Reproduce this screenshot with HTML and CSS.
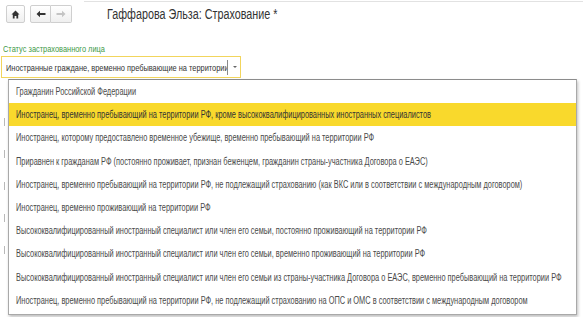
FILE: index.html
```html
<!DOCTYPE html>
<html lang="ru">
<head>
    <meta charset="UTF-8">
    <title>Гаффарова Эльза: Страхование</title>
    <link rel="stylesheet" href="styles.css">
</head>
<body>
    <div class="window">
        <div class="toolbar">
            <button class="btn home" title="Начальная страница">
                <svg width="9" height="9" viewBox="0 0 9 9"><path d="M4.5 0.5 L0.5 4.5 H1.8 V8.5 H3.6 V6 H5.4 V8.5 H7.2 V4.5 H8.5 Z" fill="#333"/></svg>
            </button>
            <div class="nav">
                <button class="btn nav-btn">
                    <svg width="10" height="8" viewBox="0 0 10 8"><path d="M0.5 4 L4 0.8 V3 H9.5 V5 H4 V7.2 Z" fill="#333"/></svg>
                </button>
                <button class="btn nav-btn">
                    <svg width="10" height="8" viewBox="0 0 10 8"><path d="M9.5 4 L6 0.8 V3 H0.5 V5 H6 V7.2 Z" fill="#c4c4c4"/></svg>
                </button>
            </div>
            <div class="title"><span class="txt">Гаффарова Эльза: Страхование *</span></div>
        </div>

        <div class="form">
            <div class="field-label"><span class="txt">Статус застрахованного лица</span></div>
            <div class="select">
                <span class="select-text"><span class="txt">Иностранные граждане, временно пребывающие на территории</span></span>
                <span class="select-btn"><span class="caret"></span></span>
            </div>
            <div class="under">
                <span class="mark"></span>
                <span class="mark"></span>
                <span class="mark"></span>
                <span class="mark"></span>
                <span class="mark"></span>
            </div>
        </div>

        <ul class="dropdown">
            <li><span class="txt">Гражданин Российской Федерации</span></li>
            <li class="active"><span class="txt">Иностранец, временно пребывающий на территории РФ, кроме высококвалифицированных иностранных специалистов</span></li>
            <li><span class="txt">Иностранец, которому предоставлено временное убежище, временно пребывающий на территории РФ</span></li>
            <li><span class="txt">Приравнен к гражданам РФ (постоянно проживает, признан беженцем, гражданин страны-участника Договора о ЕАЭС)</span></li>
            <li><span class="txt">Иностранец, временно пребывающий на территории РФ, не подлежащий страхованию (как ВКС или в соответствии с международным договором)</span></li>
            <li><span class="txt">Иностранец, временно проживающий на территории РФ</span></li>
            <li><span class="txt">Высококвалифицированный иностранный специалист или член его семьи, постоянно проживающий на территории РФ</span></li>
            <li><span class="txt">Высококвалифицированный иностранный специалист или член его семьи, временно проживающий на территории РФ</span></li>
            <li><span class="txt">Высококвалифицированный иностранный специалист или член его семьи из страны-участника Договора о ЕАЭС, временно пребывающий на территории РФ</span></li>
            <li><span class="txt">Иностранец, временно пребывающий на территории РФ, не подлежащий страхованию на ОПС и ОМС в соответствии с международным договором</span></li>
        </ul>
    </div>
</body>
</html>
```

FILE: styles.css
```css
* {
    margin: 0;
    padding: 0;
    box-sizing: border-box;
}

body {
    font-family: "Liberation Sans", Arial, sans-serif;
    background: #fff;
    color: #444;
    width: 583px;
    height: 317px;
    overflow: hidden;
}

/* the source UI uses a narrow face, so text is squeezed horizontally */
.txt {
    display: inline-block;
    white-space: nowrap;
    transform: scaleX(0.78);
    transform-origin: left center;
}

.window {
    position: relative;
    height: 317px;
    border-top: 1px solid #fff;
}

.window::before {
    content: "";
    display: block;
    height: 1px;
    margin-left: 84px;
    background: #e2e2e2;
}

.toolbar {
    display: flex;
    align-items: center;
    padding: 3px 0 0 6px;
    height: 21px;
}

.btn {
    display: flex;
    align-items: center;
    justify-content: center;
    height: 18px;
    border: 1px solid #cfcfcf;
    border-radius: 2px;
    background: linear-gradient(#ffffff, #efefef);
}

.home {
    width: 19px;
}

.nav {
    display: flex;
    margin-left: 5px;
}

.nav-btn {
    width: 21px;
}

.nav-btn:first-child {
    border-radius: 2px 0 0 2px;
}

.nav-btn:last-child {
    border-left: none;
    border-radius: 0 2px 2px 0;
}

.title {
    margin-left: 35px;
    font-size: 14px;
    color: #333;
    line-height: 18px;
    white-space: nowrap;
}

.title .txt {
    transform: scaleX(0.77);
}

.form {
    padding: 20px 0 0 2px;
}

.field-label {
    font-size: 9.5px;
    color: #3e9a47;
    line-height: 11px;
    padding-left: 1px;
}

.select {
    display: flex;
    align-items: center;
    width: 240px;
    height: 22px;
    margin-top: 2px;
    margin-left: -1px;
    border: 1px solid #f2d55c;
    background: #fff;
}

.select-text {
    flex: 1;
    padding-left: 4px;
    font-size: 9.5px;
    color: #333;
    white-space: nowrap;
    overflow: hidden;
}

.select-btn {
    display: flex;
    align-items: center;
    justify-content: center;
    width: 12px;
    height: 15px;
    border-left: 1px solid #8a8a8a;
    margin-right: 1px;
}

.caret {
    width: 0;
    height: 0;
    border-left: 2px solid transparent;
    border-right: 2px solid transparent;
    border-top: 2px solid #666;
    margin-left: 2px;
}

.under {
    display: flex;
    flex-direction: column;
    gap: 24px;
    padding: 40px 0 0 2px;
}

.mark {
    display: block;
    width: 1px;
    height: 8px;
    background: #b8b8b8;
}

.dropdown {
    position: absolute;
    left: 8px;
    top: 78px;
    width: 569px;
    list-style: none;
    background: #fff;
    border: 1px solid #a9a9a9;
    border-top-color: #8c8c8c;
    box-shadow: 1px 2px 3px rgba(0, 0, 0, 0.25);
    padding: 0 0 2px;
}

.dropdown li {
    height: 23.2px;
    line-height: 23px;
    padding-left: 7px;
    font-size: 10px;
    color: #4a4a4a;
    white-space: nowrap;
}

.dropdown li .txt {
    transform: scaleX(0.74);
}

.dropdown li.active {
    background: #f9d92c;
    color: #333;
}
```
